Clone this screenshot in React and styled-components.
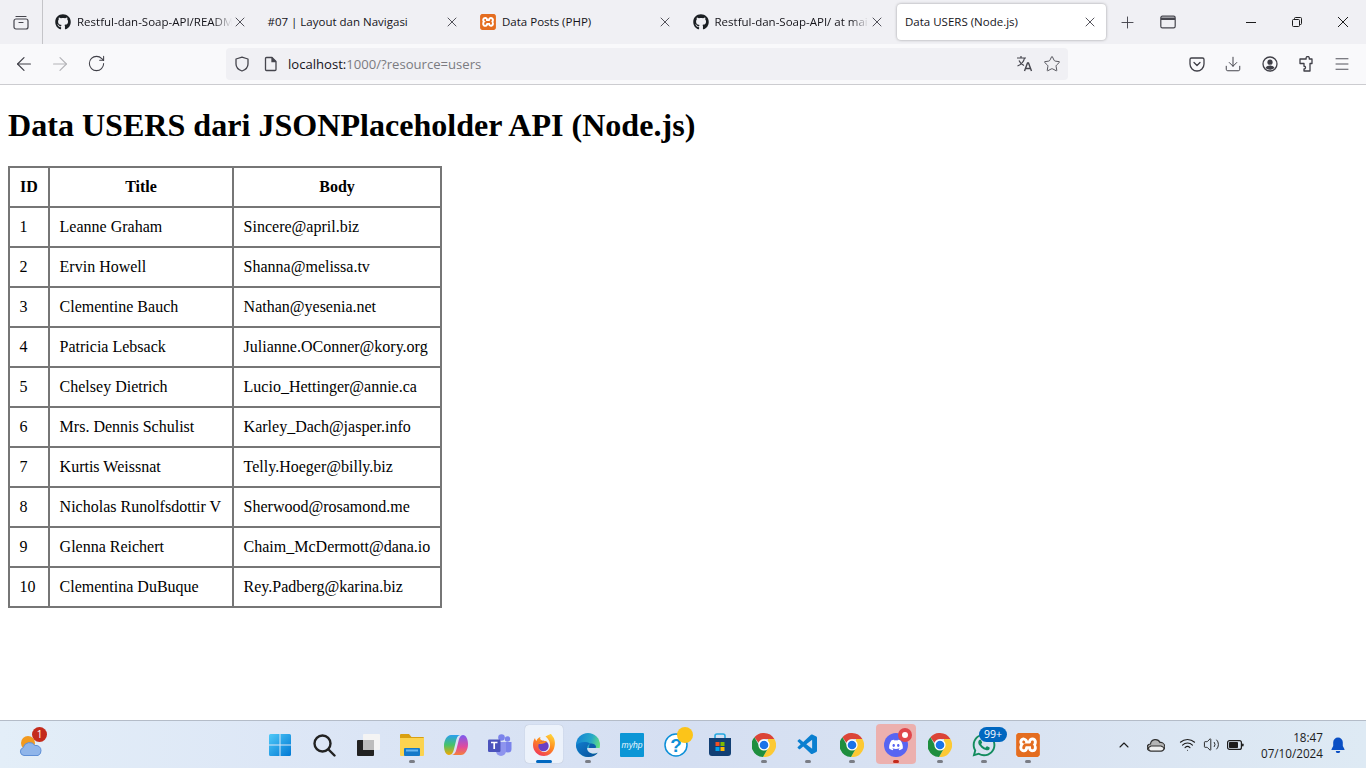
import React from 'react';
import styled, { createGlobalStyle } from 'styled-components';
import { ArrowLeft, ArrowRight, RotateCw, Star, Download, Menu, X, Plus, ChevronUp, Volume2, Wifi } from 'lucide-react';
import { FaGithub, FaWhatsapp, FaDiscord } from 'react-icons/fa';
import { SiXampp } from 'react-icons/si';
import { VscVscode } from 'react-icons/vsc';

const UI_FONT = `"Open Sans", "Noto Sans", sans-serif`;

const tabs = [
  { title: 'Restful-dan-Soap-API/READM', icon: 'github', fade: true },
  { title: '#07 | Layout dan Navigasi' },
  { title: 'Data Posts (PHP)', icon: 'xampp' },
  { title: 'Restful-dan-Soap-API/ at mai', icon: 'github', fade: true },
  { title: 'Data USERS (Node.js)', active: true },
];

const users = [
  [1, 'Leanne Graham', 'Sincere@april.biz'],
  [2, 'Ervin Howell', 'Shanna@melissa.tv'],
  [3, 'Clementine Bauch', 'Nathan@yesenia.net'],
  [4, 'Patricia Lebsack', 'Julianne.OConner@kory.org'],
  [5, 'Chelsey Dietrich', 'Lucio_Hettinger@annie.ca'],
  [6, 'Mrs. Dennis Schulist', 'Karley_Dach@jasper.info'],
  [7, 'Kurtis Weissnat', 'Telly.Hoeger@billy.biz'],
  [8, 'Nicholas Runolfsdottir V', 'Sherwood@rosamond.me'],
  [9, 'Glenna Reichert', 'Chaim_McDermott@dana.io'],
  [10, 'Clementina DuBuque', 'Rey.Padberg@karina.biz'],
];

const GlobalStyle = createGlobalStyle`
  html, body {
    margin: 0;
    padding: 0;
    height: 768px;
    overflow: hidden;
    background: #fff;
  }
`;

const Screen = styled.div`
  width: 1366px;
  height: 768px;
  display: flex;
  flex-direction: column;
`;

const TabStrip = styled.div`
  height: 44px;
  flex: none;
  display: flex;
  background: #f0f0f4;
  font-family: ${UI_FONT};
`;

const ViewButton = styled.div`
  width: 42px;
  height: 44px;
  display: flex;
  align-items: center;
  justify-content: center;
  border-right: 1px solid #c4c4c8;
  margin-right: 2px;
  color: #45454d;
`;

const TabSlot = styled.div`
  width: 212.5px;
  flex: none;
  padding: 4px 2px;
  box-sizing: border-box;
`;

const TabBody = styled.div`
  height: 36px;
  display: flex;
  align-items: center;
  padding: 0 8px;
  box-sizing: border-box;
  border-radius: 4px;
  background: ${(p) => (p.$active ? '#fff' : 'transparent')};
  box-shadow: ${(p) => (p.$active ? '0 0 3px rgba(0,0,0,0.35)' : 'none')};
`;

const TabIcon = styled.span`
  width: 16px;
  height: 16px;
  flex: none;
  margin-right: 6px;
  display: flex;
  color: #1b1f23;
`;

const TabTitle = styled.span`
  flex: 1;
  min-width: 0;
  white-space: nowrap;
  font-size: 11.5px;
  line-height: 16px;
  color: #15141a;
  ${(p) => p.$fade && 'mask-image: linear-gradient(to right, #000 88%, transparent 100%);'}
`;

const TabClose = styled.span`
  width: 16px;
  height: 16px;
  flex: none;
  display: flex;
  color: #2b2a33;
`;

const XamppTile = styled.span`
  width: ${(p) => p.$size}px;
  height: ${(p) => p.$size}px;
  flex: none;
  border-radius: 2px;
  overflow: hidden;
  background: #fff;
  color: #e46d20;
  display: flex;
`;

const StripButton = styled.div`
  width: 40px;
  height: 44px;
  flex: none;
  display: flex;
  align-items: center;
  justify-content: center;
  color: #45454d;
`;

const WindowControls = styled.div`
  margin-left: auto;
  display: flex;
  color: #1c1c1c;
`;

const WindowButton = styled.div`
  width: 46px;
  height: 44px;
  display: flex;
  align-items: center;
  justify-content: center;
`;

const NavBar = styled.div`
  height: 41px;
  flex: none;
  display: flex;
  align-items: center;
  box-sizing: border-box;
  padding: 0 0 1px 6px;
  background: #f9f9fb;
  border-bottom: 1px solid #ccccd0;
  font-family: ${UI_FONT};
`;

const NavButton = styled.div`
  width: 36px;
  height: 36px;
  flex: none;
  display: flex;
  align-items: center;
  justify-content: center;
  color: ${(p) => (p.$dim ? '#b4b4b8' : '#3f3f47')};
`;

const RightButton = styled(NavButton)`
  width: 36.3px;
`;

const UrlBar = styled.div`
  width: 842px;
  height: 32px;
  flex: none;
  margin-left: 112px;
  margin-right: 111px;
  border-radius: 4px;
  background: #f0f0f4;
  display: flex;
  align-items: center;
  color: #45454d;
`;

const UrlIcon = styled.span`
  display: flex;
  margin-left: ${(p) => p.$left || 0}px;
`;

const UrlText = styled.span`
  flex: 1;
  margin-left: 10px;
  font-size: 13.1px;
  line-height: 16px;
  color: #7b7b80;
  white-space: nowrap;
`;

const UrlHost = styled.span`
  color: #15141a;
`;

const Page = styled.main`
  flex: 1;
  min-height: 0;
  padding: 0 8px;
  background: #fff;
  color: #000;
  font-family: "Liberation Serif", "Times New Roman", serif;
`;

const Heading = styled.h1`
  margin: 22.4px 0 22px;
  font-size: 32.1px;
  line-height: 37px;
  font-weight: bold;
`;

const Table = styled.table`
  border-collapse: collapse;
  font-size: 16px;
  width: 433px;
  table-layout: fixed;
`;

const HeadCell = styled.th`
  height: 40px;
  padding: 0 10px;
  border: 2px solid #767676;
  box-sizing: border-box;
  font-weight: bold;
  text-align: center;
`;

const Cell = styled.td`
  height: 38px;
  padding: 0 10px 0 9.6px;
  border: 2px solid #767676;
  white-space: nowrap;
`;

const Taskbar = styled.footer`
  height: 48px;
  flex: none;
  display: flex;
  align-items: center;
  box-sizing: border-box;
  border-top: 1px solid #b4bcc8;
  background: linear-gradient(to right, #e3eef8 0%, #dde7f6 20%, #d5dff2 50%, #d9e3f2 75%, #deeaf4 100%);
  font-family: ${UI_FONT};
`;

const Weather = styled.div`
  width: 258px;
  flex: none;
  height: 47px;
  position: relative;
`;

const WeatherBadge = styled.span`
  position: absolute;
  left: 32px;
  top: 6px;
  width: 15px;
  height: 15px;
  border-radius: 50%;
  background: #c42b1c;
  color: #fff;
  font-size: 10px;
  line-height: 15px;
  text-align: center;
`;

const WeatherArt = styled.svg`
  position: absolute;
  left: 18px;
  top: 10px;
`;

const Apps = styled.div`
  display: flex;
  flex: none;
  width: 792px;
  height: 47px;
`;

const AppSlot = styled.div`
  width: 44px;
  height: 47px;
  flex: none;
  position: relative;
  display: flex;
  align-items: center;
  justify-content: center;
`;

const ActiveTile = styled.span`
  position: absolute;
  left: 3px;
  top: 4px;
  width: 38px;
  height: 38px;
  border-radius: 4px;
  background: #ecf2fb;
  box-shadow: 0 0 1px rgba(0, 0, 0, 0.25);
`;

const AlertTile = styled.span`
  position: absolute;
  left: 2px;
  top: 3px;
  width: 40px;
  height: 40px;
  border-radius: 4px;
  background: #ecb0ae;
`;

const AppIcon = styled.span`
  position: relative;
  width: 24px;
  height: 24px;
  display: flex;
  align-items: center;
  justify-content: center;
`;

const RunDot = styled.span`
  position: absolute;
  bottom: 5px;
  left: 50%;
  transform: translateX(-50%);
  height: 3px;
  border-radius: 2px;
  width: ${(p) => (p.$wide ? 16 : 6)}px;
  background: ${(p) => (p.$wide ? '#0067c0' : p.$red ? '#c42b1c' : '#7a7d85')};
`;

const CountBadge = styled.span`
  position: absolute;
  left: 17px;
  top: 6px;
  height: 15px;
  padding: 0 5px;
  border-radius: 8px;
  background: #0067c0;
  color: #fff;
  font-size: 10.5px;
  line-height: 15px;
`;

const YellowBadge = styled.span`
  position: absolute;
  left: 23px;
  top: 6px;
  width: 16px;
  height: 16px;
  border-radius: 50%;
  background: #fcc419;
`;

const RedBadge = styled.span`
  position: absolute;
  left: 24px;
  top: 7px;
  width: 14px;
  height: 14px;
  border-radius: 50%;
  background: #e0474c;
  &::after {
    content: '';
    position: absolute;
    left: 4px;
    top: 4px;
    width: 6px;
    height: 6px;
    border-radius: 50%;
    background: #fff;
  }
`;

const Tray = styled.div`
  flex: 1;
  display: flex;
  align-items: center;
  padding-left: 66px;
  color: #1c1c1c;
`;

const TrayIcon = styled.span`
  display: flex;
  margin-right: ${(p) => p.$gap}px;
`;

const Clock = styled.div`
  width: 79px;
  flex: none;
  text-align: right;
  font-size: 11.7px;
  line-height: 16px;
  color: #1c1c1c;
`;

const BellWrap = styled.span`
  display: flex;
  margin-left: 8px;
  color: #0a4fc4;
`;

const ViewIcon = () => (
  <svg width="16" height="16" viewBox="0 0 16 16" fill="none" stroke="currentColor" strokeWidth="1.2">
    <rect x="1" y="5" width="14" height="10" rx="2" />
    <path d="M3 2.5h10" strokeLinecap="round" />
    <path d="M6 8.5h4" strokeLinecap="round" />
  </svg>
);

const WindowListIcon = () => (
  <svg width="16" height="16" viewBox="0 0 16 16" fill="none" stroke="currentColor" strokeWidth="1.2">
    <rect x="0.8" y="2.2" width="14.4" height="11.6" rx="1.6" />
    <path d="M1 3.5h14v2.5H1z" fill="currentColor" stroke="none" />
  </svg>
);

const ShieldIcon = () => (
  <svg width="16" height="16" viewBox="0 0 16 16" fill="none" stroke="currentColor" strokeWidth="1.3">
    <path d="M8 1.2 14 3v5c0 3.5-2.600 5.800-6 7-3.400-1.200-6-3.500-6-7V3z" strokeLinejoin="round" />
  </svg>
);

const PageIcon = () => (
  <svg width="14" height="16" viewBox="0 0 14 16" fill="none" stroke="currentColor" strokeWidth="1.3">
    <path d="M2.500 1.500h5.500l4 4v8a1 1 0 0 1-1 1h-8.500a1 1 0 0 1-1-1v-11a1 1 0 0 1 1-1z" strokeLinejoin="round" />
    <path d="M8 1.500v4h4" fill="currentColor" />
  </svg>
);

const TranslateIcon = () => (
  <svg width="17" height="17" viewBox="0 0 17 17" fill="none" stroke="currentColor" strokeWidth="1.2">
    <path d="M1 3h9M5 1v2M8.500 3C8 6 5 9.500 1.500 11M3 5.500c1 2.500 3 4.200 5 5" />
    <path d="M8.500 16l3-8h1l3 8M9.700 13.500h4.600" strokeWidth="1.400" />
  </svg>
);

const PocketIcon = () => (
  <svg width="16" height="16" viewBox="0 0 16 16" fill="none" stroke="currentColor" strokeWidth="1.3">
    <path d="M2.500 2h11A1.500 1.500 0 0 1 15 3.500V8a7 7 0 0 1-14 0V3.500A1.500 1.500 0 0 1 2.500 2z" />
    <path d="M5 6.500 8 9.500l3-3" strokeLinecap="round" strokeLinejoin="round" />
  </svg>
);

const AccountIcon = () => (
  <svg width="16" height="16" viewBox="0 0 16 16">
    <circle cx="8" cy="8" r="7" fill="none" stroke="currentColor" strokeWidth="1.300" />
    <circle cx="8" cy="6.200" r="2.600" fill="currentColor" />
    <path d="M3.500 12c1-2 2.800-2.600 4.500-2.600s3.500.6 4.500 2.600a6.500 6.500 0 0 1-9 0z" fill="currentColor" />
  </svg>
);

const PuzzleIcon = () => (
  <svg width="16" height="16" viewBox="0 0 16 16" fill="none" stroke="currentColor" strokeWidth="1.300" strokeLinejoin="round">
    <path d="M6 3h2.200c-.5-1.800.6-2.500 1.500-2.500s2 .7 1.500 2.500H14v4.500h-2v7.500H6v-2.200c1 .3 1.500-.6 1.500-1.300S7 10 6 10.300V7.500H2V3z" />
  </svg>
);

const MinimizeIcon = () => (
  <svg width="10" height="10" viewBox="0 0 10 10" stroke="currentColor">
    <path d="M0 5.500h10" />
  </svg>
);

const RestoreIcon = () => (
  <svg width="10" height="10" viewBox="0 0 10 10" fill="none" stroke="currentColor">
    <rect x="0.500" y="2.500" width="7" height="7" rx="1" />
    <path d="M2.500 2.500V1.500a1 1 0 0 1 1-1h5a1 1 0 0 1 1 1v5a1 1 0 0 1-1 1h-1" />
  </svg>
);

const CloseThin = () => (
  <svg width="10" height="10" viewBox="0 0 10 10" stroke="currentColor">
    <path d="M0 0l10 10M10 0 0 10" />
  </svg>
);

const WindowsLogo = () => (
  <svg width="24" height="24" viewBox="0 0 24 24">
    <defs>
      <linearGradient id="winA" x1="0" y1="0" x2="1" y2="1">
        <stop offset="0" stopColor="#4fc9f8" />
        <stop offset="1" stopColor="#0078d4" />
      </linearGradient>
    </defs>
    <path
      fill="url(#winA)"
      d="M1 2.500A1.500 1.500 0 0 1 2.500 1h9v10.500H1zM12.500 1h9A1.500 1.500 0 0 1 23 2.500v9H12.500zM1 12.500h10.500V23h-9A1.500 1.500 0 0 1 1 21.500zM12.500 12.500H23v9a1.500 1.500 0 0 1-1.500 1.500h-9z"
    />
  </svg>
);

const SearchLogo = () => (
  <svg width="24" height="24" viewBox="0 0 24 24" fill="none" stroke="#222" strokeWidth="2.400" strokeLinecap="round">
    <circle cx="10.500" cy="10.500" r="8" />
    <path d="m16.500 16.500 6 6" />
  </svg>
);

const TaskViewLogo = () => (
  <svg width="24" height="24" viewBox="0 0 24 24">
    <rect x="1" y="7" width="17" height="16" rx="1" fill="#222" />
    <rect x="7" y="1" width="17" height="16" rx="1" fill="#f4f4f4" />
    <rect x="7" y="7" width="11" height="10" fill="#bdbdbd" />
  </svg>
);

const FolderLogo = () => (
  <svg width="24" height="24" viewBox="0 0 24 24">
    <path d="M0 2a1 1 0 0 1 1-1h8l2.500 3H23a1 1 0 0 1 1 1v3H0z" fill="#d9a011" />
    <path d="M0 5h24v17a1 1 0 0 1-1 1H1a1 1 0 0 1-1-1z" fill="#fbd350" />
    <rect x="4" y="15" width="16" height="8" rx="1" fill="#1479c9" />
    <rect x="6" y="16.500" width="12" height="2" fill="#67b6f0" />
  </svg>
);

const CopilotLogo = () => (
  <svg width="24" height="24" viewBox="0 0 24 24">
    <defs>
      <linearGradient id="copA" x1="0.500" y1="0" x2="0.500" y2="1">
        <stop offset="0" stopColor="#2a9ff0" />
        <stop offset="0.500" stopColor="#47c26a" />
        <stop offset="1" stopColor="#f5a800" />
      </linearGradient>
      <linearGradient id="copB" x1="0.500" y1="0" x2="0.500" y2="1">
        <stop offset="0" stopColor="#7a5bf0" />
        <stop offset="0.600" stopColor="#e24a9c" />
        <stop offset="1" stopColor="#f4803a" />
      </linearGradient>
    </defs>
    <path d="M7 2h10c-3 0-4 2-5 6l-2 8c-.7 3-2 6-5 6-3 0-5-4-5-9C0 7 3 2 7 2z" fill="url(#copA)" />
    <path d="M17 22H7c3 0 4.500-2 5.500-6l2-8c.7-3 2-6 4.500-6 3 0 5 4 5 9 0 6-3 11-7 11z" fill="url(#copB)" />
  </svg>
);

const TeamsLogo = () => (
  <svg width="24" height="24" viewBox="0 0 24 24">
    <circle cx="19.500" cy="6" r="2.700" fill="#7b83eb" />
    <circle cx="13.500" cy="4.500" r="3.300" fill="#7b83eb" />
    <path d="M16 9h7.500v7a3.500 3.500 0 0 1-7 0z" fill="#7b83eb" />
    <path d="M8 9h10v9a5 5 0 0 1-10 0z" fill="#8e94ee" />
    <rect x="0" y="6.500" width="12.500" height="12.500" rx="1.200" fill="#4b53bc" />
    <path d="M3 9.500h6.500M6.200 9.500V16" stroke="#fff" strokeWidth="1.700" />
  </svg>
);

const FirefoxLogo = () => (
  <svg width="24" height="24" viewBox="0 0 24 24">
    <defs>
      <linearGradient id="foxA" x1="0.800" y1="0" x2="0.200" y2="1">
        <stop offset="0" stopColor="#ffd43a" />
        <stop offset="0.450" stopColor="#ff8a1f" />
        <stop offset="1" stopColor="#f0325e" />
      </linearGradient>
    </defs>
    <path d="M12 23C5.500 23 1 18 1 12c0-2.500.7-5 2-7 .2 1.500.8 2.400 1.500 3 .6-2 2-3.500 4-4-1 2 0 3 2 3.500 3 .5 4 1.500 4.500 2.500-1-.3-2-.3-3 .5 2.500.2 3.500 2 3 4-.5 1.500-2 2.500-3.500 2.500-2.500 0-4-1.500-4.500-3 0 3 3 5.500 6 5 3.500-.5 5.500-4 5-8-.3-3-2-5.500-4.500-7.500C17 1.500 19 1 19 1c1 2 3 3 3.500 6 .7 3 .6 5-.5 8.500-1.500 4.500-5.500 7.500-10 7.500z" fill="url(#foxA)" />
    <circle cx="11.500" cy="13" r="5.200" fill="#6b3fc4" />
    <path d="M6.500 11c1-2 3-3 5.500-3 1.500 0 2.700.5 3.500 1.200-1.500-.2-2.600.3-3.200 1C11 10.700 9 11.200 6.500 11z" fill="#ff8a1f" />
  </svg>
);

const EdgeLogo = () => (
  <svg width="24" height="24" viewBox="0 0 24 24">
    <defs>
      <linearGradient id="edgeA" x1="0" y1="0.200" x2="1" y2="0.500">
        <stop offset="0" stopColor="#1383d4" />
        <stop offset="0.600" stopColor="#27a8c8" />
        <stop offset="1" stopColor="#68e27c" />
      </linearGradient>
      <linearGradient id="edgeB" x1="0" y1="0" x2="1" y2="1">
        <stop offset="0" stopColor="#0f7ccc" />
        <stop offset="1" stopColor="#0a4f9a" />
      </linearGradient>
    </defs>
    <circle cx="12" cy="12" r="12" fill="url(#edgeA)" />
    <path d="M0 12C.5 18.500 6 24 12 24c4 0 8-1.500 10-4.500-3 1.500-7 1.500-9.500-1-2.500-2.500-1.500-6 1.500-8C9 7.500 2 10 0 12z" fill="url(#edgeB)" />
    <path d="M14 10.500c2.500-.5 5.500.5 6 3 .2 1-.5 1.500-1.500 1.500H13c0-2 .3-3.500 1-4.500z" fill="#0c5fae" />
    <path d="M22 19.500c-3 1.500-7 1.500-9.500-1-1-1-1.400-2.300-1.300-3.500H24c-.2 1.700-1 3.200-2 4.500z" fill="#d5dff2" />
  </svg>
);

const MyHpLogo = () => (
  <svg width="24" height="24" viewBox="0 0 24 24">
    <rect width="24" height="24" rx="1" fill="#0b96d6" />
    <text x="12" y="15" textAnchor="middle" fill="#e6f6ff" fontFamily="Liberation Sans, sans-serif" fontSize="8.500" fontStyle="italic">myhp</text>
  </svg>
);

const HelpLogo = () => (
  <svg width="24" height="24" viewBox="0 0 24 24">
    <circle cx="12" cy="12" r="11" fill="#fff" stroke="#0c8fd8" strokeWidth="1.500" />
    <text x="12" y="19" textAnchor="middle" fill="#0c8fd8" fontFamily="Liberation Sans, sans-serif" fontWeight="bold" fontSize="19">?</text>
  </svg>
);

const StoreLogo = () => (
  <svg width="24" height="24" viewBox="0 0 24 24">
    <path d="M7 5V3a2 2 0 0 1 2-2h6a2 2 0 0 1 2 2v2" fill="none" stroke="#25a8e0" strokeWidth="1.600" />
    <path d="M1 5h22v15a3 3 0 0 1-3 3H4a3 3 0 0 1-3-3z" fill="#123f74" />
    <rect x="7.500" y="9" width="4" height="4" fill="#f25022" />
    <rect x="12.500" y="9" width="4" height="4" fill="#7fba00" />
    <rect x="7.500" y="14" width="4" height="4" fill="#00a4ef" />
    <rect x="12.500" y="14" width="4" height="4" fill="#ffb900" />
  </svg>
);

const ChromeLogo = () => (
  <svg width="24" height="24" viewBox="0 0 24 24">
    <path d="M12 0a12 12 0 0 1 10.400 6H12a6 6 0 0 0-5.600 3.800L2.400 4.200A12 12 0 0 1 12 0z" fill="#db4437" />
    <path d="M22.400 6A12 12 0 0 1 11 24l5-8.700A6 6 0 0 0 16 8.500V6z" fill="#fcc934" />
    <path d="M2.400 4.200l4.900 8.500a6 6 0 0 0 8.700 2.600L11 24A12 12 0 0 1 2.400 4.200z" fill="#1e8e3e" />
    <circle cx="12" cy="12" r="5.600" fill="#fff" />
    <circle cx="12" cy="12" r="4.300" fill="#1a73e8" />
  </svg>
);

const DiscordLogo = () => (
  <svg width="24" height="24" viewBox="0 0 24 24">
    <circle cx="12" cy="12" r="12" fill="#5865f2" />
    <g transform="translate(4.500 4.500) scale(0.0234)">
      <FaDiscord size={640} color="#fff" />
    </g>
  </svg>
);

const CloudIcon = () => (
  <svg width="18" height="14" viewBox="0 0 18 14">
    <path d="M4 13a3.500 3.500 0 0 1-.5-7A5 5 0 0 1 13 4.500 4 4 0 0 1 14 13z" fill="#b5b5b5" stroke="#333" strokeWidth="1.200" />
    <path d="M1.500 9.500 4 8h10l3 1.500c0 2-1.500 3.500-3 3.500H4C2.500 13 1.500 11.500 1.500 9.500z" fill="#f0f0f0" stroke="#333" strokeWidth="1.200" />
  </svg>
);

const BatteryIcon = () => (
  <svg width="17" height="12" viewBox="0 0 17 12">
    <rect x="0.600" y="1.600" width="13.800" height="8.800" rx="2" fill="none" stroke="#1c1c1c" strokeWidth="1.200" />
    <rect x="2" y="3" width="9" height="6" rx="0.800" fill="#1c1c1c" />
    <rect x="15" y="4.500" width="1.600" height="3" rx="0.800" fill="#1c1c1c" />
  </svg>
);

const BellIcon = () => (
  <svg width="14" height="16" viewBox="0 0 14 16" fill="currentColor">
    <path d="M7 0.500a4.800 4.800 0 0 1 4.800 4.800V9l1.700 3.200c.2.400 0 .8-.5.800H1c-.5 0-.7-.4-.5-.8L2.200 9V5.300A4.800 4.800 0 0 1 7 .5z" />
    <path d="M4.800 14h4.400a2.200 2.200 0 0 1-4.400 0z" />
  </svg>
);

const apps = [
  { id: 'win', art: <WindowsLogo /> },
  { id: 'search', art: <SearchLogo /> },
  { id: 'tasks', art: <TaskViewLogo /> },
  { id: 'files', art: <FolderLogo />, dot: true },
  { id: 'copilot', art: <CopilotLogo /> },
  { id: 'teams', art: <TeamsLogo /> },
  { id: 'firefox', art: <FirefoxLogo />, focused: true },
  { id: 'edge', art: <EdgeLogo />, dot: true },
  { id: 'myhp', art: <MyHpLogo /> },
  { id: 'help', art: <HelpLogo />, yellow: true },
  { id: 'store', art: <StoreLogo /> },
  { id: 'chrome1', art: <ChromeLogo />, dot: true },
  { id: 'code', art: <VscVscode size={24} color="#0a7fd0" />, dot: true },
  { id: 'chrome2', art: <ChromeLogo />, dot: true },
  { id: 'discord', art: <DiscordLogo />, alert: true },
  { id: 'chrome3', art: <ChromeLogo />, dot: true },
  { id: 'whatsapp', art: <FaWhatsapp size={26} color="#128c5e" />, dot: true, count: '99+' },
  {
    id: 'xampp',
    art: (
      <XamppTile $size={24}>
        <SiXampp size={24} />
      </XamppTile>
    ),
    dot: true,
  },
];

export default function App() {
  return (
    <Screen>
      <GlobalStyle />
      <TabStrip>
        <ViewButton>
          <ViewIcon />
        </ViewButton>
        {tabs.map((tab) => (
          <TabSlot key={tab.title}>
            <TabBody $active={tab.active}>
              {tab.icon === 'github' && (
                <TabIcon>
                  <FaGithub size={16} />
                </TabIcon>
              )}
              {tab.icon === 'xampp' && (
                <TabIcon>
                  <XamppTile $size={16}>
                    <SiXampp size={16} />
                  </XamppTile>
                </TabIcon>
              )}
              <TabTitle $fade={tab.fade}>{tab.title}</TabTitle>
              <TabClose>
                <X size={16} strokeWidth={1.2} />
              </TabClose>
            </TabBody>
          </TabSlot>
        ))}
        <StripButton>
          <Plus size={19} strokeWidth={1.2} />
        </StripButton>
        <StripButton>
          <WindowListIcon />
        </StripButton>
        <WindowControls>
          <WindowButton>
            <MinimizeIcon />
          </WindowButton>
          <WindowButton>
            <RestoreIcon />
          </WindowButton>
          <WindowButton>
            <CloseThin />
          </WindowButton>
        </WindowControls>
      </TabStrip>

      <NavBar>
        <NavButton>
          <ArrowLeft size={22} strokeWidth={1.3} />
        </NavButton>
        <NavButton $dim>
          <ArrowRight size={22} strokeWidth={1.3} />
        </NavButton>
        <NavButton>
          <RotateCw size={19} strokeWidth={1.3} />
        </NavButton>
        <UrlBar>
          <UrlIcon $left={8}>
            <ShieldIcon />
          </UrlIcon>
          <UrlIcon $left={14}>
            <PageIcon />
          </UrlIcon>
          <UrlText>
            <UrlHost>localhost:</UrlHost>1000/?resource=users
          </UrlText>
          <UrlIcon>
            <TranslateIcon />
          </UrlIcon>
          <UrlIcon $left={10}>
            <Star size={18} strokeWidth={1.2} />
          </UrlIcon>
          <UrlIcon $left={7} />
        </UrlBar>
        <RightButton>
          <PocketIcon />
        </RightButton>
        <RightButton>
          <Download size={18} strokeWidth={1.3} />
        </RightButton>
        <RightButton>
          <AccountIcon />
        </RightButton>
        <RightButton>
          <PuzzleIcon />
        </RightButton>
        <RightButton>
          <Menu size={18} strokeWidth={1.2} />
        </RightButton>
      </NavBar>

      <Page>
        <Heading>Data USERS dari JSONPlaceholder API (Node.js)</Heading>
        <Table>
          <colgroup>
            <col width="40" />
            <col width="184" />
            <col width="208" />
          </colgroup>
          <thead>
            <tr>
              <HeadCell>ID</HeadCell>
              <HeadCell>Title</HeadCell>
              <HeadCell>Body</HeadCell>
            </tr>
          </thead>
          <tbody>
            {users.map(([id, name, email]) => (
              <tr key={id}>
                <Cell>{id}</Cell>
                <Cell>{name}</Cell>
                <Cell>{email}</Cell>
              </tr>
            ))}
          </tbody>
        </Table>
      </Page>

      <Taskbar>
        <Weather>
          <WeatherArt width="28" height="26" viewBox="0 0 28 26">
            <circle cx="10" cy="12" r="7" fill="#f29a1f" />
            <path d="M6 24.500a4 4 0 0 1-.8-7.800A6.500 6.500 0 0 1 17 14.500a5 5 0 0 1 6 5 5 5 0 0 1-3 5z" fill="#8fb5ea" stroke="#5f8fd6" />
          </WeatherArt>
          <WeatherBadge>1</WeatherBadge>
        </Weather>
        <Apps>
          {apps.map((app) => (
            <AppSlot key={app.id}>
              {app.focused && <ActiveTile />}
              {app.alert && <AlertTile />}
              <AppIcon>{app.art}</AppIcon>
              {(app.dot || app.focused || app.alert) && <RunDot $wide={app.focused} $red={app.alert} />}
              {app.yellow && <YellowBadge />}
              {app.alert && <RedBadge />}
              {app.count && <CountBadge>{app.count}</CountBadge>}
            </AppSlot>
          ))}
        </Apps>
        <Tray>
          <TrayIcon $gap={15}>
            <ChevronUp size={16} strokeWidth={1.6} />
          </TrayIcon>
          <TrayIcon $gap={14}>
            <CloudIcon />
          </TrayIcon>
          <TrayIcon $gap={7}>
            <Wifi size={17} strokeWidth={1.5} />
          </TrayIcon>
          <TrayIcon $gap={7}>
            <Volume2 size={17} strokeWidth={1.3} />
          </TrayIcon>
          <TrayIcon $gap={0}>
            <BatteryIcon />
          </TrayIcon>
          <Clock>
            18:47
            <br />
            07/10/2024
          </Clock>
          <BellWrap>
            <BellIcon />
          </BellWrap>
        </Tray>
      </Taskbar>
    </Screen>
  );
}
